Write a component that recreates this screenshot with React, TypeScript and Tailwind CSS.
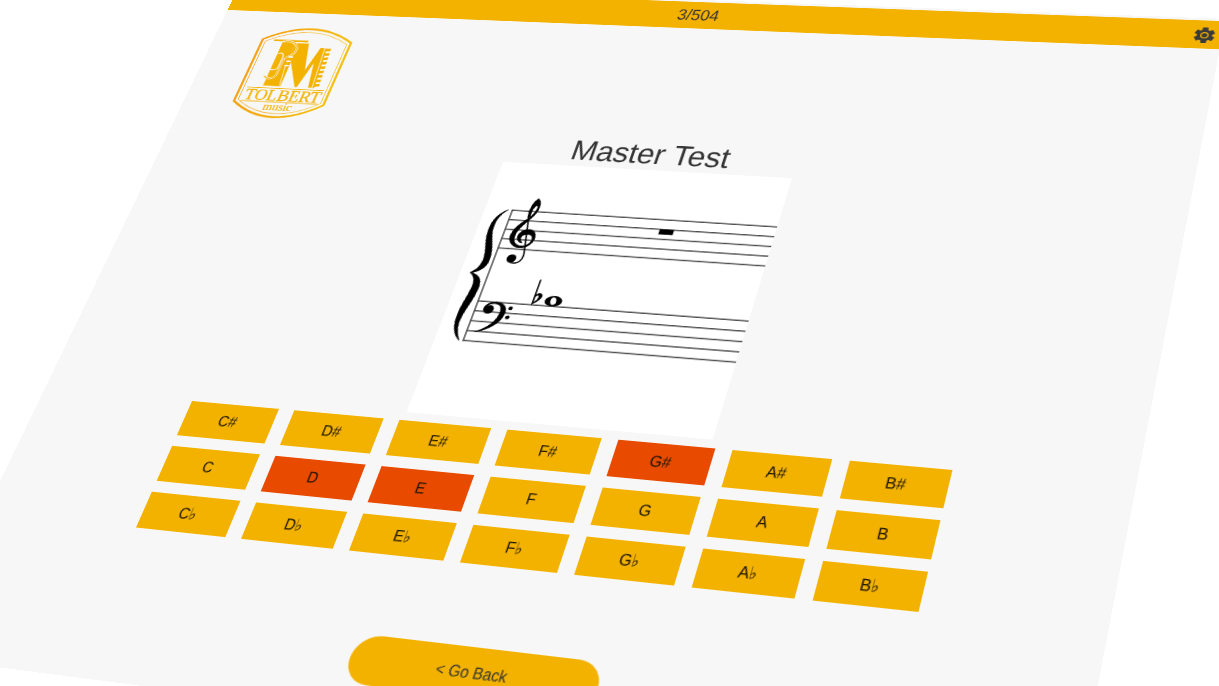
import React from "react";

type Key = { label: string; active?: boolean };

const KEYS: Key[] = [
  { label: "C#" }, { label: "D#" }, { label: "E#" }, { label: "F#" }, { label: "G#", active: true }, { label: "A#" }, { label: "B#" },
  { label: "C" }, { label: "D", active: true }, { label: "E", active: true }, { label: "F" }, { label: "G" }, { label: "A" }, { label: "B" },
  { label: "C♭" }, { label: "D♭" }, { label: "E♭" }, { label: "F♭" }, { label: "G♭" }, { label: "A♭" }, { label: "B♭" },
];

const TREBLE_LINES = [59.2, 70.8, 82.4, 94, 105.6];
const BASS_LINES = [169.2, 180.8, 192.4, 204, 215.6];
const GEAR_TEETH = [0, 60, 120, 180, 240, 300];

function Logo() {
  return (
    <svg viewBox="54 56 112 131" className="mt-[17px] ml-[54px] h-[131px] w-[112px] self-start" fill="none">
      <defs>
        <linearGradient id="shield" x1="0" x2="1" y1="0" y2="0">
          <stop offset="0" stopColor="#f59e0b" />
          <stop offset="1" stopColor="#f4bd08" />
        </linearGradient>
      </defs>
      <path d="M57.500 78 Q109 45 160.500 78 V164 Q109 202 57.500 164 Z" stroke="url(#shield)" strokeWidth="2.600" />
      <path d="M61.500 80.500 Q109 51.500 156.500 80.500 V162 Q109 195 61.500 162 Z" stroke="url(#shield)" strokeWidth="0.8" />
      <g fill="#f4b200">
        <path d="M71 77.500 H111 V80 H97 L100 141.500 H82.500 L82 80 H71 Z" />
        <path d="M97 81.500 H113 L122 118 L128.500 87 H134.500 L141 141.500 H134.500 L128.500 108 L121.500 141.500 H119 L102 108 L102.500 141.500 H100 Z" />
      </g>
      <path d="M137.500 87.500 L143 141.500" stroke="#f4b200" strokeWidth="7" strokeDasharray="3.6 2.500" />
      <path d="M135.300 87.500 L140.800 141.500" stroke="#f4b200" strokeWidth="1.500" />
      <path d="M133.700 87 L139 141.500" stroke="#f7f7f7" strokeWidth="0.9" />
      <g strokeLinecap="round">
        <path d="M83 80 C96 78 105 86 101 96 C98 101 92 100 92 108 V124 C92 132 84 133 80 129" stroke="#f7f7f7" strokeWidth="2.600" />
        <path d="M84 80 C96 78 105 86 101 96 C98 101 92 100 92 108 V124 C92 132 84 133 79 129" stroke="#f4b200" strokeWidth="1.200" />
        <path d="M83 97 C89 94 91 100 90 106 V115 C90 120 84 121 80 118" stroke="#f7f7f7" strokeWidth="1.2" />
        <path d="M97 101h4M97 107h4M97 113h4" stroke="#f7f7f7" strokeWidth="1.800" />
        <path d="M97.500 114 L101.500 141" stroke="#f7f7f7" strokeWidth="0.8" />
      </g>
      <path d="M65 144.500 H154 M65 163 H154" stroke="#f4b200" strokeWidth="1.100" />
      <text x="66.500" y="161" textLength="87" lengthAdjust="spacingAndGlyphs" fill="#f4b200" stroke="#f4b200" strokeWidth="0.3" className="font-['Liberation_Serif',serif] text-[22px]">TOLBERT</text>
      <text x="93.500" y="174.500" textLength="33" lengthAdjust="spacingAndGlyphs" fill="#f4b200" stroke="#f4b200" strokeWidth="0.2" className="font-['Liberation_Serif',serif] text-[14px]">music</text>
    </svg>
  );
}

function Gear() {
  return (
    <svg viewBox="-12 -12 24 24" className="mt-px size-[22px] justify-self-end">
      <g fill="#3a3a3a">
        <circle r="8" />
        {GEAR_TEETH.map((a) => (
          <rect key={a} x="-3" y="-10.800" width="6" height="6" rx="1" transform={`rotate(${a})`} />
        ))}
      </g>
      <circle r="3.700" fill="none" stroke="#f4b200" strokeWidth="1.400" />
    </svg>
  );
}

function Staff() {
  return (
    <svg viewBox="0 0 300 300" className="mt-[2.6px] h-[300px] w-[299.5px] shrink-0 bg-white" preserveAspectRatio="none" fill="#000">
      <g stroke="#4d4d4d" strokeWidth="1.500">
        {[...TREBLE_LINES, ...BASS_LINES].map((y) => (
          <line key={y} x1="28.500" x2="300" y1={y} y2={y} />
        ))}
        <line x1="29" x2="29" y1="58.500" y2="216.300" />
      </g>
      <g transform="translate(0.3 -0.8)">
        <path d="M24.500 59.500 C14 66 10.500 76 12 90 C13 102 18 110 18 121 C18 129 15 134 9.700 137.500 C15 141 17.500 147 17 154 C16.500 166 13 174 13 188 C13 200 16 210 24.500 216.500 C19 208 16.500 200 18 190 C19.500 177 24.500 168 24 152 C23.500 143 18 139.500 11.500 137.500 C18 135.500 24.500 131 24.500 121 C24.500 106 17.500 97 16 84 C15 74 17.500 66 24.500 59.500 Z" stroke="#000" strokeWidth="0.6" />
        <path d="M47.3 67 C45.5 57 47.5 48 51.6 44.2 C54.8 47 56 53 55.3 58 C54 69 42.500 76 41 89 C40.500 98 45 102.300 51.500 102.300 C57 102.300 60 98 60 94 C60 90 57.500 87.800 54 87.800 C50 87.800 47.500 90 47.800 93 C48 96 50 98 51 98.600 C47 98 44.300 94.500 44.300 91 C44.300 86 48.500 82 53.500 82 C58.500 82 62.200 86.500 62.200 92 C62.200 99 57 104.400 50.500 104.400 C42.500 104.400 36.500 98 36.500 90.500 C36.500 79 46 73 51 65 C54 59.500 54.400 54 53 51.500 C50.500 53 48.500 58 49.200 66 Z" stroke="#000" strokeWidth="0.9" />
        <path d="M48 66 L57.300 112 C58 119 54.500 123 50 123 C46 123 43 121 42.500 118" fill="none" stroke="#000" strokeWidth="1.500" />
        <circle cx="46.200" cy="117.800" r="4.800" />
        <path d="M36.500 205.800 C48 200 55 191 55 180.800 C55 174.300 51.500 171.600 47 171.600 C42.500 171.600 40 173.800 39.300 176 C43 172.500 47.500 175 47 179.300 C46.500 184.800 38 184.800 37.300 178.800 C36.800 173.800 41.500 170 47.500 170 C55 170 60 174.300 60 181.300 C60 193.300 49 202.300 36.500 205.800 Z" stroke="#000" strokeWidth="0.7" />
        <circle cx="42.200" cy="179" r="4.600" />
        <circle cx="64" cy="175.800" r="2.200" />
        <circle cx="64" cy="186.400" r="2.200" />
        <path d="M83 140.500 H84.300 V158 C87 154.500 91.500 156 91 160 C90.400 164.400 86 166.900 83 170 Z M84.500 160.400 V166.900 C87 164.400 88.100 162 87.800 160 C87.400 157.800 85.500 158.400 84.500 160.400 Z" fillRule="evenodd" stroke="#000" strokeWidth="0.3" />
        <path d="M95.200 164 A8.800 6.100 0 1 1 112.800 164 A8.800 6.100 0 1 1 95.200 164 Z M101 162.200 C100.500 166.200 102.300 168.500 104.300 168.300 C106.300 168 107.300 166.200 106.800 163.700 C106.300 160.700 105 159.400 103.200 159.600 C101.700 159.800 101.200 160.800 101 162.200 Z" fillRule="evenodd" />
        <rect x="184.800" y="71.600" width="14.500" height="6" />
      </g>
    </svg>
  );
}

export default function App() {
  return (
    <div className="h-[686px] w-[1219px] overflow-hidden bg-white font-['Liberation_Sans',Arial,sans-serif]">
      <div className="flex h-[829px] w-[1059px] origin-top-left flex-col items-center bg-[#f7f7f7] pt-[3px] text-[#333] [transform:matrix3d(0.79938,0.031587,0,-0.00010674,-0.37533,0.68151,0,-0.00019917,0,0,1,0,240.49,-16.72,0,1)]">
        <header className="grid h-9 w-full shrink-0 grid-cols-[1fr_auto_1fr] items-center bg-[#f4b200] pr-[6px] pl-[6px]">
          <span className="col-start-2 mt-px scale-y-[1.14] text-[17.7px] leading-none">3/504</span>
          <Gear />
        </header>
        <Logo />
        <h1 className="scale-y-[1.1] text-[31.8px] leading-[34px]">Master Test</h1>
        <Staff />
        <div className="mt-[9.4px] grid w-[740px] shrink-0 grid-cols-7 gap-x-4 gap-y-3">
          {KEYS.map((k) => (
            <button
              key={k.label}
              className={
                k.active
                  ? "h-[39px] bg-[#e84b00] text-[14.8px] leading-none text-[#1a1400]"
                  : "h-[39px] bg-[#f4b200] text-[14.8px] leading-none text-[#1a1400]"
              }
            >
              <span className="inline-block scale-y-[1.13]">{k.label}</span>
            </button>
          ))}
        </div>
        <button className="mt-20 h-12 w-[230px] shrink-0 rounded-full bg-[#f4b200] text-[14px] leading-none">
          <span className="inline-block scale-y-[1.14]">&lt; Go Back</span>
        </button>
      </div>
    </div>
  );
}
